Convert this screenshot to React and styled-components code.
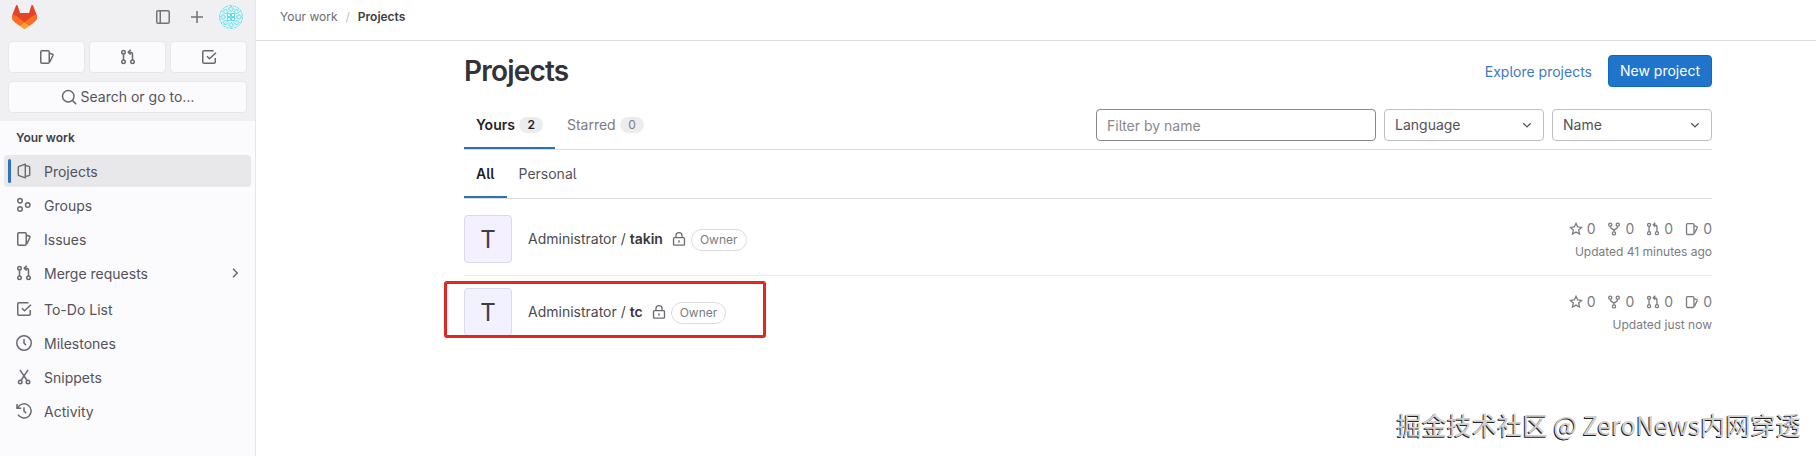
import React from "react";
import styled, { createGlobalStyle } from "styled-components";

const GlobalStyle = createGlobalStyle`
  *, *::before, *::after { box-sizing: border-box; }
  body {
    margin: 0;
    background: #fff;
    color: #3f3e45;
    font-family: Inter, "Noto Sans", sans-serif;
    font-feature-settings: "cv05" 1;
    font-size: 14px;
    line-height: 20px;
    overflow: hidden;
  }
  button, input { font: inherit; font-feature-settings: inherit; color: inherit; margin: 0; }
`;

/* ---------- icons ---------- */

const IconSvg = styled.svg`
  display: block;
  flex: none;
  width: ${(p) => p.$size || 16}px;
  height: ${(p) => p.$size || 16}px;
  fill: none;
  stroke: currentColor;
  stroke-width: 1.5;
`;

const shapes = {
  sidebar: (
    <>
      <rect x="1.75" y="1.75" width="12.5" height="12.5" rx="1.25" />
      <path d="M5.25 2v12" />
    </>
  ),
  plus: <path d="M8 2v12M2 8h12" />,
  issues: (
    <>
      <rect x="1.75" y="1.75" width="8.5" height="12.5" rx="1.25" />
      <path d="M10.5 4.2l3 1.1a.8.8 0 0 1 .5 1L10.8 13" />
    </>
  ),
  merge: (
    <>
      <circle cx="3.5" cy="3.25" r="1.75" />
      <circle cx="3.5" cy="12.75" r="1.75" />
      <circle cx="12.5" cy="12.75" r="1.75" />
      <path d="M3.5 5v6M12.5 11V5.75a2.5 2.5 0 0 0-2.5-2.5H8.5M10.6.9L8.3 3.2l2.3 2.3" />
    </>
  ),
  todo: (
    <>
      <path d="M14.25 9v4c0 .7-.55 1.25-1.25 1.25H3c-.7 0-1.25-.55-1.25-1.25V3c0-.7.55-1.25 1.25-1.25h9.5" />
      <path d="M6 7.2l2.5 2.6 6.5-6" />
    </>
  ),
  search: (
    <>
      <circle cx="7.25" cy="7.25" r="5.75" />
      <path d="M11.4 11.4l3.8 3.8" />
    </>
  ),
  project: (
    <path
      d="M9.3 1.1v13.8L3 12.6a1 1 0 0 1-.7-.95v-7.3A1 1 0 0 1 3 3.4zM9.3 2.5l3.7.9a.9.9 0 0 1 .7.9v7.4a.9.9 0 0 1-.7.9l-3.7.9"
      strokeWidth="1.4"
      strokeLinejoin="round"
    />
  ),
  group: (
    <>
      <circle cx="4" cy="3.75" r="2.25" />
      <circle cx="4" cy="12" r="2.25" />
      <circle cx="11.75" cy="8" r="2.25" />
    </>
  ),
  clock: (
    <>
      <circle cx="8" cy="8" r="7.25" />
      <path d="M8 4v4l2 2.2" />
    </>
  ),
  snippet: (
    <>
      <circle cx="4.25" cy="13" r="1.75" />
      <circle cx="12" cy="13" r="1.75" />
      <path d="M4 .8l7 10.7M12 .8L5 11.5" />
    </>
  ),
  history: <path d="M1.6 5A7.1 7.1 0 1 1 2 11.7M1 1v4.2h4.2M8 4.2V8l2.2 2.2" />,
  chevronRight: <path d="M6 3.8L10.2 8 6 12.2" />,
  chevronDown: <path d="M3.8 6L8 10.2 12.2 6" />,
  lock: (
    <>
      <rect x="1.75" y="6.5" width="12.5" height="8.6" rx="1" />
      <path d="M4.5 6.5V4.3a3.5 3.5 0 0 1 7 0v2.2M8 9.3v2.9" />
    </>
  ),
  star: <path d="M8 1.6l1.9 4.1 4.5.5-3.35 3.05.95 4.45L8 11.5l-4 2.2.95-4.45L1.6 6.2l4.5-.5z" />,
  fork: (
    <>
      <circle cx="3.7" cy="3" r="1.8" />
      <circle cx="12.3" cy="3" r="1.8" />
      <circle cx="8" cy="13" r="1.8" />
      <path d="M3.7 5c0 2.4 2 2.6 4.3 4.2C10.3 7.6 12.3 7.4 12.3 5M8 8.8V11" />
    </>
  ),
};

const Icon = ({ name, size }) => (
  <IconSvg viewBox="0 0 16 16" $size={size} aria-hidden="true">
    {shapes[name]}
  </IconSvg>
);

const LogoSvg = styled.svg`
  display: block;
  width: 25px;
  height: 24px;
  margin-right: auto;
`;

const Logo = () => (
  <LogoSvg viewBox="0 0 25 24">
    <path fill="#e24329" d="M24.5 9.5L21 .6a.9.9 0 0 0-1.7.1L17 7.9H8L5.7.7A.9.9 0 0 0 4 .6L.5 9.5a6.4 6.4 0 0 0 2.2 7.5L12.5 24l9.8-7a6.4 6.4 0 0 0 2.2-7.5z" />
    <path fill="#fc6d26" d="M24.5 9.5a11.5 11.5 0 0 0-4.6 2.1l-7.4 5.6 4.7 3.5 5.1-3.7a6.4 6.4 0 0 0 2.2-7.5zM.5 9.5a11.5 11.5 0 0 1 4.6 2.1l7.4 5.6-4.7 3.5-5.1-3.7A6.4 6.4 0 0 1 .5 9.5z" />
    <path fill="#fca326" d="M7.8 20.7l4.7 3.3 4.7-3.3-4.7-3.5z" />
  </LogoSvg>
);

const AvatarSvg = styled.svg`
  display: block;
  width: 24px;
  height: 24px;
  border-radius: 50%;
`;

const Identicon = () => (
  <AvatarSvg viewBox="0 0 24 24">
    <rect width="24" height="24" fill="#d9f5f8" />
    <g fill="none" stroke="#62d8e5" strokeWidth="1">
      <path d="M8.5 8.5h3v3h-3zM12.5 8.5h3v3h-3zM8.5 12.5h3v3h-3zM12.5 12.5h3v3h-3z" fill="#f2fbfc" />
      <path d="M4 6.5L6.5 4 9 6.5 6.5 9zM15 6.5L17.5 4 20 6.5 17.5 9zM4 17.5L6.5 15 9 17.5 6.5 20zM15 17.5l2.5-2.5 2.5 2.5-2.5 2.5z" />
      <path d="M9.5 4L12 1.5 14.5 4 12 6.5zM9.5 20l2.5-2.5 2.5 2.5-2.5 2.5zM1.5 12L4 9.5 6.5 12 4 14.5zM17.5 12L20 9.5l2.5 2.5-2.5 2.5z" />
      <circle cx="12" cy="12" r="11.5" strokeDasharray="3 1" />
    </g>
  </AvatarSvg>
);

/* ---------- sidebar ---------- */

const Page = styled.div`
  display: flex;
  height: 456px;
`;

const Sidebar = styled.aside`
  flex: none;
  width: 256px;
  background: #fbfafd;
  border-right: 1px solid #e6e6e9;
`;

const SidebarTop = styled.div`
  height: 121px;
  padding: 5px 8px 0;
  background: #f0f0f2;
`;

const BrandBar = styled.div`
  display: flex;
  align-items: center;
  height: 24px;
  padding: 0 4px;
  color: #737278;
`;

const BarAction = styled.span`
  margin-right: ${(p) => p.$gap}px;
`;

const Shortcuts = styled.div`
  display: grid;
  grid-template-columns: repeat(3, 1fr);
  gap: 4px;
  margin-top: 12px;
`;

const SidebarButton = styled.button`
  display: flex;
  align-items: center;
  justify-content: center;
  gap: 4px;
  width: 100%;
  height: 32px;
  padding: 0;
  border: 1px solid #e8e7eb;
  border-radius: 4px;
  background: #fbfafd;
  color: #6a696f;
`;

const SearchWrap = styled.div`
  margin-top: 8px;
`;

const SearchText = styled.span`
  color: #55545b;
`;

const SectionTitle = styled.h2`
  margin: 0;
  padding: 7px 16px 8px;
  font-size: 12px;
  font-weight: 600;
  line-height: 19px;
`;

const NavList = styled.nav`
  display: flex;
  flex-direction: column;
  gap: 2px;
  padding: 0 4px;
`;

const NavItem = styled.a`
  display: flex;
  align-items: center;
  gap: 12px;
  height: 32px;
  margin-bottom: ${(p) => (p.$spaced ? 2 : 0)}px;
  padding: 0 8px 0 4px;
  border-radius: 4px;
  background: ${(p) => (p.$active ? "#e8e7ea" : "transparent")};
  color: #6a696f;

  &::before {
    content: "";
    width: 3px;
    height: 24px;
    margin-right: -7px;
    border-radius: 2px;
    background: ${(p) => (p.$active ? "#2f72bf" : "transparent")};
  }
`;

const NavLabel = styled.span`
  flex: 1;
  padding-top: 1px;
  color: #535258;
`;

/* ---------- main ---------- */

const Main = styled.main`
  flex: 1;
  min-width: 0;
`;

const Breadcrumbs = styled.div`
  display: flex;
  gap: 8px;
  height: 41px;
  padding: 7px 24px 0;
  border-bottom: 1px solid #dcdcde;
  font-size: 12px;
  color: #6c6b71;
`;

const Slash = styled.span`
  color: #bfbfc3;
`;

const Current = styled.span`
  font-weight: 600;
  color: #3f3e45;
`;

const Content = styled.div`
  width: 1248px;
  margin-left: 208px;
`;

const TitleRow = styled.div`
  display: flex;
  align-items: center;
  height: 60px;
`;

const Title = styled.h1`
  margin: 0 auto 0 0;
  color: #333238;
  font-size: 28px;
  font-weight: 600;
  line-height: 36px;
  letter-spacing: -0.8px;
`;

const ExploreLink = styled.a`
  margin-right: 16px;
  padding-top: 2px;
  color: #4079c2;
`;

const PrimaryButton = styled.button`
  width: 104px;
  height: 32px;
  padding: 0;
  border: 1px solid #1068bf;
  border-radius: 4px;
  background: #1f75cb;
  color: #fff;
  line-height: 16px;
`;

const TabBar = styled.div`
  display: flex;
  height: 49px;
  border-bottom: 1px solid #dcdcde;
`;

const Tab = styled.a`
  display: flex;
  align-items: center;
  gap: 4.5px;
  height: 48px;
  padding: 0 12px;
  color: ${(p) => (p.$active ? "#1f1e24" : p.$muted ? "#7c7b81" : "#535258")};
  font-weight: ${(p) => (p.$active ? 600 : 400)};
  box-shadow: ${(p) => (p.$active ? "inset 0 -2px 0 #2b70b8" : "none")};
`;

const Count = styled.span`
  height: 16px;
  padding: 0 8px;
  border-radius: 8px;
  background: #ececef;
  font-size: 12px;
  line-height: 16px;
`;

const Filters = styled.div`
  display: flex;
  gap: 8px;
  margin: 8px 0 0 auto;
`;

const FilterInput = styled.input`
  width: 280px;
  height: 32px;
  padding: 1px 10px 0;
  border: 1px solid #89888d;
  border-radius: 4px;
  background: #fff;
  outline: 0;

  &::placeholder { color: #89888d; opacity: 1; }
`;

const Select = styled.button`
  display: flex;
  align-items: center;
  justify-content: space-between;
  width: 160px;
  height: 32px;
  padding: 0 9px 0 10px;
  border: 1px solid #bfbfc3;
  border-radius: 4px;
  background: #fff;
  color: #535258;
`;

const ProjectRow = styled.div`
  display: flex;
  height: ${(p) => (p.$last ? 73 : 77)}px;
  padding-top: ${(p) => (p.$last ? 12 : 16)}px;
  border-bottom: 1px solid ${(p) => (p.$last ? "transparent" : "#ececef")};
`;

const ProjectAvatar = styled.div`
  flex: none;
  width: 48px;
  height: 48px;
  margin-right: 16px;
  border: 1px solid #dcdae4;
  border-radius: 4px;
  background: ${(p) => p.$tint};
  font-size: 24px;
  line-height: 47px;
  text-align: center;
`;

const ProjectName = styled.div`
  display: flex;
  align-items: center;
  height: 48px;
  margin-right: auto;
`;

const NameText = styled.span`
  margin-right: 9px;
  color: #4b4a50;
  white-space: pre;
`;

const StrongName = styled.b`
  color: #38373d;
  font-weight: 600;
`;

const LockMark = styled.span`
  color: #6c6b71;
`;

const Role = styled.span`
  height: 22px;
  margin: 2px 0 0 5px;
  padding: 0 8px;
  border: 1px solid #dcdcde;
  border-radius: 11px;
  color: #7c7b81;
  font-size: 12px;
  line-height: 20px;
`;

const Meta = styled.div`
  display: flex;
  flex-direction: column;
  align-items: flex-end;
  padding-top: 4px;
  color: #7c7b81;
`;

const Stats = styled.div`
  display: flex;
  gap: 12px;
`;

const Stat = styled.span`
  display: flex;
  align-items: center;
  gap: 4px;
`;

const Updated = styled.span`
  margin-top: 3px;
  font-size: 12px;
`;

const Highlight = styled.div`
  position: absolute;
  left: 444px;
  top: 281px;
  width: 322px;
  height: 57px;
  border: 3px solid #e2281e;
  border-radius: 3px;
`;

const Watermark = styled.div`
  position: absolute;
  right: 15px;
  top: 406px;
  color: #cfcfcf;
  font-family: "Noto Sans CJK SC", sans-serif;
  font-feature-settings: normal;
  font-size: 25.2px;
  line-height: 36px;
  white-space: nowrap;
  text-shadow: -1px 1px 0 #222;
`;

const navItems = [
  { icon: "project", label: "Projects", active: true },
  { icon: "group", label: "Groups" },
  { icon: "issues", label: "Issues" },
  { icon: "merge", label: "Merge requests", expandable: true },
  { icon: "todo", label: "To-Do List" },
  { icon: "clock", label: "Milestones" },
  { icon: "snippet", label: "Snippets" },
  { icon: "history", label: "Activity" },
];

const projects = [
  { name: "takin", updated: "Updated 41 minutes ago", tint: "#f4f0ff" },
  { name: "tc", updated: "Updated just now", tint: "#f1f1ff" },
];

export default function App() {
  return (
    <>
      <GlobalStyle />
      <Page>
        <Sidebar>
          <SidebarTop>
            <BrandBar>
              <Logo />
              <BarAction $gap={18}><Icon name="sidebar" /></BarAction>
              <BarAction $gap={14}><Icon name="plus" /></BarAction>
              <Identicon />
            </BrandBar>
            <Shortcuts>
              {["issues", "merge", "todo"].map((name) => (
                <SidebarButton key={name} aria-label={name}><Icon name={name} /></SidebarButton>
              ))}
            </Shortcuts>
            <SearchWrap>
              <SidebarButton><Icon name="search" /><SearchText>Search or go to…</SearchText></SidebarButton>
            </SearchWrap>
          </SidebarTop>
          <SectionTitle>Your work</SectionTitle>
          <NavList>
            {navItems.map((item) => (
              <NavItem key={item.label} $active={item.active} $spaced={item.expandable}>
                <Icon name={item.icon} />
                <NavLabel>{item.label}</NavLabel>
                {item.expandable && <Icon name="chevronRight" />}
              </NavItem>
            ))}
          </NavList>
        </Sidebar>
        <Main>
          <Breadcrumbs>
            <span>Your work</span>
            <Slash>/</Slash>
            <Current>Projects</Current>
          </Breadcrumbs>
          <Content>
            <TitleRow>
              <Title>Projects</Title>
              <ExploreLink>Explore projects</ExploreLink>
              <PrimaryButton>New project</PrimaryButton>
            </TitleRow>
            <TabBar>
              <Tab $active>Yours<Count>2</Count></Tab>
              <Tab $muted>Starred<Count>0</Count></Tab>
              <Filters>
                <FilterInput placeholder="Filter by name" />
                <Select>Language<Icon name="chevronDown" size={14} /></Select>
                <Select>Name<Icon name="chevronDown" size={14} /></Select>
              </Filters>
            </TabBar>
            <TabBar>
              <Tab $active>All</Tab>
              <Tab>Personal</Tab>
            </TabBar>
            {projects.map((project, index) => (
              <ProjectRow key={project.name} $last={index === projects.length - 1}>
                <ProjectAvatar $tint={project.tint}>T</ProjectAvatar>
                <ProjectName>
                  <NameText>Administrator / <StrongName>{project.name}</StrongName></NameText>
                  <LockMark><Icon name="lock" size={14} /></LockMark>
                  <Role>Owner</Role>
                </ProjectName>
                <Meta>
                  <Stats>
                    {["star", "fork", "merge", "issues"].map((name) => (
                      <Stat key={name}><Icon name={name} size={14} />0</Stat>
                    ))}
                  </Stats>
                  <Updated>{project.updated}</Updated>
                </Meta>
              </ProjectRow>
            ))}
          </Content>
        </Main>
      </Page>
      <Highlight />
      <Watermark>掘金技术社区 @ ZeroNews内网穿透</Watermark>
    </>
  );
}
